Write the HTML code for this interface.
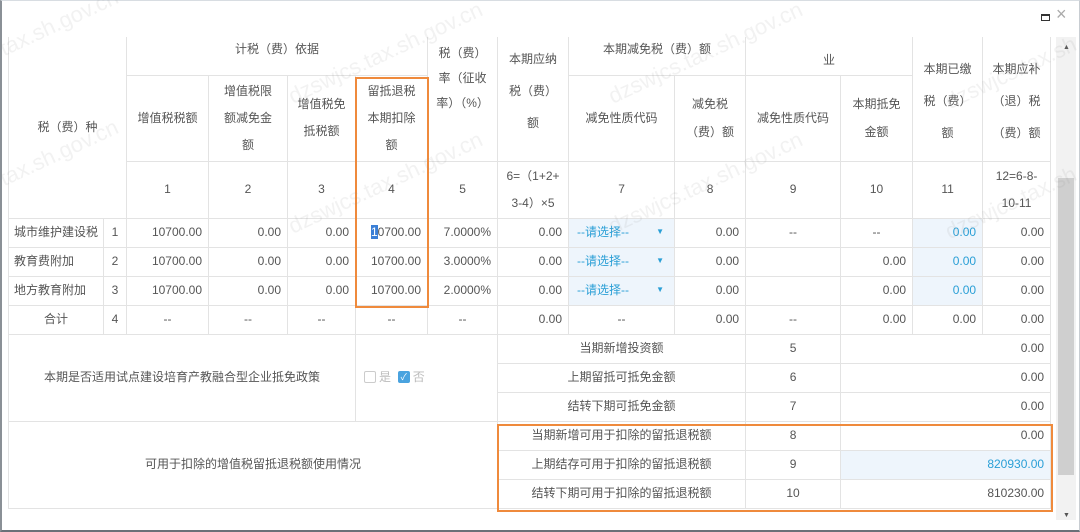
<!DOCTYPE html>
<html><head><meta charset="utf-8">
<style>
*{margin:0;padding:0;box-sizing:border-box}
html,body{width:1080px;height:532px;overflow:hidden;background:#fff}
body{position:relative;font-family:"Liberation Sans","Noto Sans CJK SC",sans-serif;font-size:12px;color:#555}
.frame{position:absolute;left:0;top:0;width:1080px;height:532px;border-left:2px solid #8a9096;border-top:1px solid #d8dde2;border-bottom:2px solid #6a7078;border-right:1px solid #c8cdd2}
table{position:absolute;left:8px;top:37px;border-collapse:collapse;table-layout:fixed;width:1042px}
td{border:1px solid #e3e3e3;text-align:center;vertical-align:middle;overflow:hidden;white-space:nowrap;line-height:25px}
.r{text-align:right;padding-right:6px}
.l{text-align:left;padding-left:5px}
.b{color:#2a9fd6}
.bg{background:#eef5fc}
.sel{background:#eef5fc;color:#2a9fd6;text-align:left;padding-left:8px;position:relative}
.sel i{position:absolute;right:10px;top:0;font-style:normal;font-size:8px;color:#2a9fd6}
.ob{position:absolute;border:2px solid #ef8a3c}
.cb{display:inline-block;width:12px;height:12px;border:1px solid #ccc;border-radius:2px;vertical-align:-2px;margin-right:3px;overflow:hidden}
.cb.on{background:#4aa3df;border-color:#4aa3df;color:#fff;font-size:9px;line-height:10px;text-align:center}
.wm{position:absolute;color:rgba(150,150,150,.12);font-size:22px;transform:rotate(-25deg);white-space:nowrap}
</style></head><body>
<div class="frame"></div>
<div style="position:absolute;left:1041px;top:14px;width:9px;height:7px;border:1px solid #333;border-top-width:2px"></div>
<div style="position:absolute;left:1056px;top:4px;font-size:18px;color:#aaa">×</div>
<table>
<colgroup>
<col style="width:95px"><col style="width:23px"><col style="width:82px"><col style="width:79px"><col style="width:68px"><col style="width:72px"><col style="width:70px"><col style="width:71px"><col style="width:106px"><col style="width:71px"><col style="width:95px"><col style="width:72px"><col style="width:70px"><col style="width:68px">
</colgroup>
<tr style="height:38px">
<td colspan="2" rowspan="3" style="border-top:none">税（费）种</td>
<td colspan="4" style="vertical-align:top;padding-top:0;border-top:none">计税（费）依据</td>
<td rowspan="2" style="vertical-align:top;padding-top:4px;line-height:25px;border-top:none">税（费）<br>率（征收<br>率）（%）</td>
<td rowspan="2" style="vertical-align:top;padding-top:6px;line-height:32px;border-top:none">本期应纳<br>税（费）<br>额</td>
<td colspan="2" style="vertical-align:top;padding-top:0;border-top:none">本期减免税（费）额</td>
<td colspan="2" style="vertical-align:top;padding-top:11px;border-top:none">业</td>
<td rowspan="2" style="line-height:32px;padding-top:4px;border-top:none">本期已缴<br>税（费）<br>额</td>
<td rowspan="2" style="line-height:32px;padding-top:4px;border-top:none">本期应补<br>（退）税<br>（费）额</td>
</tr>
<tr style="height:86px">
<td>增值税税额</td>
<td style="line-height:27px">增值税限<br>额减免金<br>额</td>
<td style="line-height:27px">增值税免<br>抵税额</td>
<td style="line-height:27px">留抵退税<br>本期扣除<br>额</td>
<td>减免性质代码</td>
<td style="line-height:28px">减免税<br>（费）额</td>
<td>减免性质代码</td>
<td style="line-height:28px">本期抵免<br>金额</td>
</tr>
<tr style="height:57px">
<td>1</td><td>2</td><td>3</td><td>4</td><td>5</td>
<td style="line-height:27px">6=（1+2+<br>3-4）×5</td>
<td>7</td><td>8</td><td>9</td><td>10</td><td>11</td>
<td style="line-height:27px">12=6-8-<br>10-11</td>
</tr>
<tr style="height:29px"><td class="l">城市维护建设税</td><td>1</td><td class="r">10700.00</td><td class="r">0.00</td><td class="r">0.00</td><td class="r"><span style="background:#3b7fd6;color:#fff">1</span>0700.00</td><td class="r">7.0000%</td><td class="r">0.00</td><td class="sel">--请选择--<i>▼</i></td><td class="r">0.00</td><td>--</td><td>--</td><td class="r b bg">0.00</td><td class="r">0.00</td></tr>
<tr style="height:29px"><td class="l">教育费附加</td><td>2</td><td class="r">10700.00</td><td class="r">0.00</td><td class="r">0.00</td><td class="r">10700.00</td><td class="r">3.0000%</td><td class="r">0.00</td><td class="sel">--请选择--<i>▼</i></td><td class="r">0.00</td><td></td><td class="r">0.00</td><td class="r b bg">0.00</td><td class="r">0.00</td></tr>
<tr style="height:29px"><td class="l">地方教育附加</td><td>3</td><td class="r">10700.00</td><td class="r">0.00</td><td class="r">0.00</td><td class="r">10700.00</td><td class="r">2.0000%</td><td class="r">0.00</td><td class="sel">--请选择--<i>▼</i></td><td class="r">0.00</td><td></td><td class="r">0.00</td><td class="r b bg">0.00</td><td class="r">0.00</td></tr>
<tr style="height:29px"><td>合计</td><td>4</td><td>--</td><td>--</td><td>--</td><td>--</td><td>--</td><td class="r">0.00</td><td>--</td><td class="r">0.00</td><td>--</td><td class="r">0.00</td><td class="r">0.00</td><td class="r">0.00</td></tr>
<tr style="height:29px"><td colspan="5" rowspan="3">本期是否适用试点建设培育产教融合型企业抵免政策</td><td colspan="2" rowspan="3" class="l" style="padding-left:8px;color:#bbb"><span class="cb"></span>是&nbsp;&nbsp;<span class="cb on">✓</span>否</td><td colspan="3">当期新增投资额</td><td>5</td><td colspan="3" class="r">0.00</td></tr>
<tr style="height:29px"><td colspan="3">上期留抵可抵免金额</td><td>6</td><td colspan="3" class="r">0.00</td></tr>
<tr style="height:29px"><td colspan="3">结转下期可抵免金额</td><td>7</td><td colspan="3" class="r">0.00</td></tr>
<tr style="height:29px"><td colspan="7" rowspan="3">可用于扣除的增值税留抵退税额使用情况</td><td colspan="3">当期新增可用于扣除的留抵退税额</td><td>8</td><td colspan="3" class="r">0.00</td></tr>
<tr style="height:29px"><td colspan="3">上期结存可用于扣除的留抵退税额</td><td>9</td><td colspan="3" class="r b bg">820930.00</td></tr>
<tr style="height:29px"><td colspan="3">结转下期可用于扣除的留抵退税额</td><td>10</td><td colspan="3" class="r">810230.00</td></tr>
</table>
<div class="ob" style="left:355px;top:77px;width:74px;height:231px"></div>
<div class="ob" style="left:497px;top:424px;width:556px;height:88px"></div>
<div style="position:absolute;left:1056px;top:37px;width:20px;height:483px;background:#f2f2f2"></div>
<div style="position:absolute;left:1063px;top:44px;font-size:7px;color:#555">▲</div>
<div style="position:absolute;left:1063px;top:512px;font-size:7px;color:#555;line-height:7px">▼</div>
<div style="position:absolute;left:1058px;top:178px;width:16px;height:297px;background:#cfcfcf"></div>
<div class="wm" style="left:-5px;top:10px">tax.sh.gov.cn</div>
<div class="wm" style="left:280px;top:40px">dzswjcs.tax.sh.gov.cn</div>
<div class="wm" style="left:-5px;top:140px">tax.sh.gov.cn</div>
<div class="wm" style="left:280px;top:170px">dzswjcs.tax.sh.gov.cn</div>
<div class="wm" style="left:600px;top:40px">dzswjcs.tax.sh.gov.cn</div>
<div class="wm" style="left:600px;top:170px">dzswjcs.tax.sh.gov.cn</div>
<div class="wm" style="left:940px;top:60px">dzswjcs.tax.sh</div>
<div class="wm" style="left:940px;top:190px">dzswjcs.tax.sh</div>
</body></html>
